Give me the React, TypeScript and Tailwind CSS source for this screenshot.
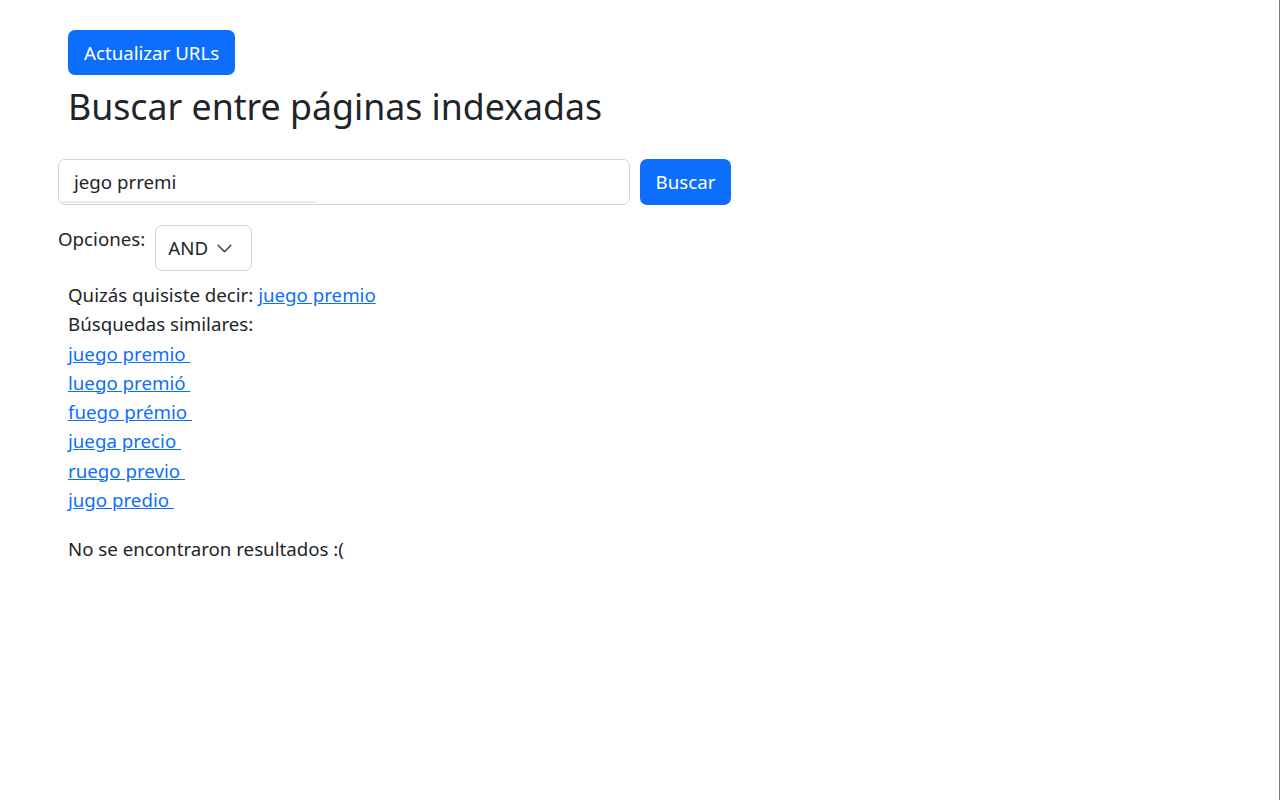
const similares = [
  'juego premio',
  'luego premió',
  'fuego prémio',
  'juega precio',
  'ruego previo',
  'jugo predio',
]

export default function App() {
  return (
    <div
      className="min-h-[800px] w-full bg-white border-r border-[#7a7a7a] text-[#212529] pl-[58px] pt-[30px]"
      style={{ fontFamily: '"Noto Sans", "Open Sans", sans-serif' }}
    >
      {/* Actualizar */}
      <div className="ml-[10px]">
        <button className="h-[45px] px-[16px] rounded-[7px] bg-[#0d6efd] text-white text-[18.7px] leading-[28px]">
          Actualizar URLs
        </button>
      </div>

      <h1 className="ml-[10px] mt-[8px] text-[35.7px] leading-[46px] font-normal">
        Buscar entre páginas indexadas
      </h1>

      {/* Search bar */}
      <div className="mt-[30px] flex items-center gap-[10px]">
        <div className="relative w-[572px] h-[46px] border border-[#ced4da] rounded-[7px] flex items-center px-[15px]">
          <span className="text-[18.7px]">jego prremi</span>
          <div className="absolute left-[3px] bottom-[1px] w-[254px] h-[2px] bg-[#e9ecef]" />
        </div>
        <button className="h-[46px] w-[91px] rounded-[7px] bg-[#0d6efd] text-white text-[18.7px]">
          Buscar
        </button>
      </div>

      {/* Opciones */}
      <div className="mt-[20px] flex items-start gap-[10px]">
        <span className="text-[18.7px] leading-[28px]">Opciones:</span>
        <div className="h-[46px] w-[97px] border border-[#ced4da] rounded-[7px] flex items-center pl-[12px] pr-[18px] justify-between">
          <span className="text-[18.7px]">AND</span>
          <svg viewBox="0 0 16 16" className="w-[17px] h-[17px]" fill="none">
            <path d="m2 5 6 6 6-6" stroke="#343a40" strokeWidth="1.3" strokeLinecap="round" strokeLinejoin="round" />
          </svg>
        </div>
      </div>

      {/* Results */}
      <div className="ml-[10px] mt-[9px] text-[18.7px] leading-[29.3px]">
        <p>
          Quizás quisiste decir:{' '}
          <a href="#" className="text-[#0d6efd] underline">
            juego premio
          </a>
        </p>
        <p>Búsquedas similares:</p>
        {similares.map((s) => (
          <div key={s}>
            <a href="#" className="text-[#0d6efd] underline">
              {s + '\u00a0'}
            </a>
          </div>
        ))}
        <p className="mt-[20px]">No se encontraron resultados :(</p>
      </div>
    </div>
  )
}
